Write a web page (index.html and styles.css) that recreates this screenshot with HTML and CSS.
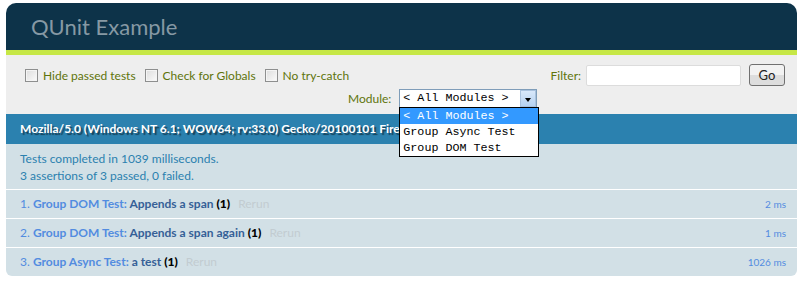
FILE: index.html
```html
<!DOCTYPE html>
<html lang="en">
<head>
  <meta charset="UTF-8">
  <title>QUnit Example</title>
  <link rel="stylesheet" href="styles.css">
</head>
<body>

<h1 class="qunit-header">QUnit Example</h1>
<div class="qunit-banner"></div>

<div class="toolbar">
  <div class="toolbar-row">
    <label class="check"><input type="checkbox"> Hide passed tests</label>
    <label class="check"><input type="checkbox"> Check for Globals</label>
    <label class="check"><input type="checkbox"> No try-catch</label>
    <div class="filter">
      <label for="filterInput">Filter:</label>
      <input type="text" id="filterInput">
      <button class="go">Go</button>
    </div>
  </div>
  <div class="toolbar-row module-row">
    <span class="module-label">Module:</span>
    <div class="select">
      <span class="select-value">&lt; All Modules &gt;</span>
      <span class="select-arrow"></span>
      <ul class="dropdown">
        <li class="selected">&lt; All Modules &gt;</li>
        <li>Group Async Test</li>
        <li>Group DOM Test</li>
      </ul>
    </div>
  </div>
</div>

<div class="user-agent">Mozilla/5.0 (Windows NT 6.1; WOW64; rv:33.0) Gecko/20100101 Firefox/33.0</div>

<div class="testresult">
  Tests completed in 1039 milliseconds.<br>
  3 assertions of 3 passed, 0 failed.
</div>

<ol class="tests">
  <li class="pass">
    <strong><span class="module-name">Group DOM Test</span>: <span class="test-name">Appends a span</span> <b class="counts">(1)</b></strong>
    <a href="#">Rerun</a>
    <span class="runtime">2 ms</span>
  </li>
  <li class="pass">
    <strong><span class="module-name">Group DOM Test</span>: <span class="test-name">Appends a span again</span> <b class="counts">(1)</b></strong>
    <a href="#">Rerun</a>
    <span class="runtime">1 ms</span>
  </li>
  <li class="pass">
    <strong><span class="module-name">Group Async Test</span>: <span class="test-name">a test</span> <b class="counts">(1)</b></strong>
    <a href="#">Rerun</a>
    <span class="runtime">1026 ms</span>
  </li>
</ol>

</body>
</html>
```

FILE: styles.css
```css
body {
  font-family: Lato, "Open Sans", sans-serif;
  font-size: 12px;
  margin: 3px 3px 0 6px;
  background-color: #fff;
}
.qunit-header {
  margin: 0;
  height: 47px;
  line-height: 47px;
  padding-left: 25px;
  font-size: 22px;
  font-weight: 400;
  color: #8699a4;
  background-color: #0d3349;
  border-radius: 10px 10px 0 0;
}
.qunit-banner {
  height: 5px;
  background-color: #c6e746;
}
.toolbar {
  height: 59px;
  background-color: #eee;
  color: #5e740b;
  padding: 9px 12px 0 19px;
  box-sizing: border-box;
}
.toolbar-row {
  display: flex;
  align-items: center;
}
.check {
  display: flex;
  align-items: center;
  margin-right: 9px;
}
.check input {
  appearance: none;
  width: 13px;
  height: 13px;
  margin: 0 5px 0 0;
  border: 1px solid #8e8f8f;
  background: linear-gradient(135deg, #dcdcdc, #fbfbfb);
  box-shadow: inset 0 0 0 1px #f4f4f4;
}
.filter {
  margin-left: auto;
  display: flex;
  align-items: center;
}
.filter input {
  width: 153px;
  height: 19px;
  margin: 0 8px 0 5px;
  padding: 0;
  border: 1px solid #dcdcdc;
  border-radius: 2px;
  background: #fff;
}
.go {
  width: 36px;
  height: 22px;
  padding: 0;
  font-family: Lato, sans-serif;
  font-size: 13px;
  color: #222;
  border: 1px solid #707070;
  border-radius: 3px;
  background: linear-gradient(#f2f2f2 50%, #dddddd 50%);
}
.module-row {
  padding-left: 323px;
  margin-top: 3px;
}
.module-label {
  margin-right: 8px;
}
.select {
  position: relative;
  display: flex;
  width: 138px;
  height: 19px;
  box-sizing: border-box;
  border: 1px solid #7f9db9;
  background: #fff;
  font-family: "Liberation Mono", monospace;
  font-size: 11.7px;
  color: #000;
}
.select-value {
  flex: 1;
  line-height: 17px;
  padding-left: 3px;
}
.select-arrow {
  position: relative;
  width: 16px;
  border: 1px solid #a9c2de;
  background: linear-gradient(#d8e8fa, #b6d2f1);
  box-sizing: border-box;
}
.select-arrow::after {
  content: "";
  position: absolute;
  left: 4px;
  top: 7px;
  border-left: 3.5px solid transparent;
  border-right: 3.5px solid transparent;
  border-top: 4px solid #000;
}
.dropdown {
  position: absolute;
  top: 17px;
  left: -1px;
  z-index: 2;
  width: 138px;
  margin: 0;
  padding: 0;
  list-style: none;
  border: 1px solid #000;
  background: #fff;
}
.dropdown li {
  height: 16px;
  line-height: 16px;
  padding-left: 3px;
}
.dropdown .selected {
  background-color: #3399ff;
  color: #fff;
}
.user-agent {
  height: 30px;
  line-height: 30px;
  padding-left: 14px;
  background-color: #2b81af;
  color: #fff;
  font-weight: 700;
  text-shadow: rgba(0, 0, 0, 0.5) 2px 2px 1px;
  white-space: nowrap;
  overflow: hidden;
}
.testresult {
  height: 46px;
  box-sizing: border-box;
  padding: 6px 14px 0;
  line-height: 17px;
  color: #2b81af;
  background-color: #d2e0e6;
  border-bottom: 1px solid #fff;
}
.tests {
  margin: 0;
  padding: 0;
  list-style-position: inside;
}
.tests li {
  display: list-item;
  height: 28px;
  line-height: 28px;
  padding: 0 11px 0 14px;
  color: #528ce0;
  background-color: #d2e0e6;
  border-bottom: 1px solid #fff;
}
.tests li:last-child {
  border-bottom: none;
  border-radius: 0 0 6px 6px;
}
.tests strong {
  font-weight: 700;
}
.test-name {
  color: #366097;
}
.counts {
  color: #000;
}
.tests a {
  padding: 0 5px;
  color: #c2ccd1;
  text-decoration: none;
}
.runtime {
  float: right;
  font-size: 10px;
}
```
